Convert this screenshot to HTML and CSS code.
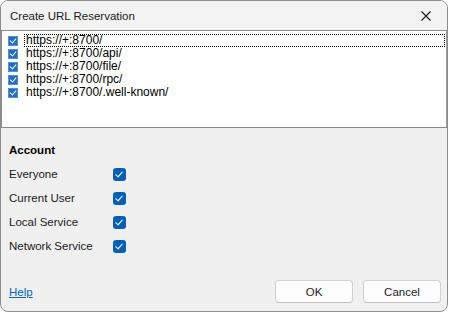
FILE: index.html
```html
<!DOCTYPE html>
<html>
  <head>
    <title>Create URL Reservation</title>
    <link rel="stylesheet" href="styles.css">
  </head>
  <body>
    <div class="dialog">
      <div class="title-bar">
        <span class="title">Create URL Reservation</span>
        <button class="close-btn" aria-label="Close">
          <svg width="10" height="10" viewBox="0 0 10 10">
            <path d="M0.5 0.5 L9.5 9.5 M9.5 0.5 L0.5 9.5" stroke="#1a1a1a" stroke-width="1.1" fill="none"/>
          </svg>
        </button>
      </div>

      <div class="url-list">
        <div class="url-item">
          <span class="small-check"></span>
          <span class="url-text focused">https://+:8700/</span>
        </div>
        <div class="url-item">
          <span class="small-check"></span>
          <span class="url-text">https://+:8700/api/</span>
        </div>
        <div class="url-item">
          <span class="small-check"></span>
          <span class="url-text">https://+:8700/file/</span>
        </div>
        <div class="url-item">
          <span class="small-check"></span>
          <span class="url-text">https://+:8700/rpc/</span>
        </div>
        <div class="url-item">
          <span class="small-check"></span>
          <span class="url-text">https://+:8700/.well-known/</span>
        </div>
      </div>

      <div class="account-section">
        <div class="section-title">Account</div>
        <div class="account-row">
          <span class="account-label">Everyone</span>
          <span class="check"></span>
        </div>
        <div class="account-row">
          <span class="account-label">Current User</span>
          <span class="check"></span>
        </div>
        <div class="account-row">
          <span class="account-label">Local Service</span>
          <span class="check"></span>
        </div>
        <div class="account-row">
          <span class="account-label">Network Service</span>
          <span class="check"></span>
        </div>
      </div>

      <div class="footer">
        <a class="help-link" href="#">Help</a>
        <div class="footer-buttons">
          <button class="dlg-btn">OK</button>
          <button class="dlg-btn">Cancel</button>
        </div>
      </div>
    </div>
  </body>
</html>
```

FILE: styles.css
```css
* {
  box-sizing: border-box;
}
body {
  margin: 0;
  background: #ffffff;
  font-family: "Liberation Sans", Arial, sans-serif;
  font-size: 11px;
  color: #000000;
}
.dialog {
  width: 448px;
  height: 312px;
  border: 1px solid #8e8e8e;
  border-radius: 8px;
  background-color: #f0f0f0;
  display: flex;
  flex-direction: column;
  overflow: hidden;
}
.title-bar {
  height: 29px;
  display: flex;
  align-items: center;
  justify-content: space-between;
  padding-left: 9px;
  background-color: #f3f3f3;
}
.title {
  font-size: 11.5px;
  color: #1a1a1a;
}
.close-btn {
  border: none;
  background: transparent;
  width: 40px;
  height: 29px;
  padding: 0;
  display: flex;
  align-items: center;
  justify-content: center;
  margin-right: 1px;
}
.url-list {
  height: 98px;
  border: 1px solid #8a8a8a;
  border-right-color: #9a9a9a;
  background-color: #ffffff;
  padding-top: 3px;
}
.url-item {
  height: 13px;
  display: flex;
  align-items: center;
  font-size: 12px;
}
.small-check {
  width: 10px;
  height: 10px;
  margin-left: 6px;
  margin-right: 6px;
  background-color: #1b6fc6;
  border: 1px solid #5b8fd0;
  position: relative;
}
.small-check::after {
  content: "";
  position: absolute;
  left: 2px;
  top: 0px;
  width: 3px;
  height: 5px;
  border-right: 1px solid #ffffff;
  border-bottom: 1px solid #ffffff;
  transform: rotate(40deg);
}
.url-text {
  height: 13px;
  line-height: 13px;
  padding-left: 2px;
  flex-grow: 1;
  color: #000000;
}
.url-text.focused {
  outline: 1px dotted #000000;
  outline-offset: -1px;
  margin-right: 1px;
}
.account-section {
  padding: 16px 0 0 8px;
}
.section-title {
  font-weight: bold;
  height: 12px;
  line-height: 12px;
  font-size: 11.5px;
  margin-bottom: 6px;
}
.account-row {
  height: 24px;
  display: flex;
  align-items: center;
}
.account-label {
  width: 104px;
  font-size: 11.5px;
  color: #1a1a1a;
}
.check {
  width: 13px;
  height: 13px;
  border-radius: 3px;
  background-color: #005fb8;
  position: relative;
}
.check::after {
  content: "";
  position: absolute;
  left: 4px;
  top: 2px;
  width: 3px;
  height: 6px;
  border-right: 1px solid #ffffff;
  border-bottom: 1px solid #ffffff;
  transform: rotate(42deg);
}
.footer {
  margin-top: auto;
  display: flex;
  align-items: center;
  justify-content: space-between;
  padding: 0 6px 8px 8px;
}
.help-link {
  color: #0066cc;
  font-size: 11.5px;
  text-decoration: underline;
}
.footer-buttons {
  display: flex;
  gap: 10px;
}
.dlg-btn {
  width: 78px;
  height: 23px;
  border: 1px solid #d0d0d0;
  border-bottom-color: #c0c0c0;
  border-radius: 4px;
  background-color: #fdfdfd;
  font-family: "Liberation Sans", Arial, sans-serif;
  font-size: 11.5px;
  color: #1a1a1a;
  padding: 0;
}
```
